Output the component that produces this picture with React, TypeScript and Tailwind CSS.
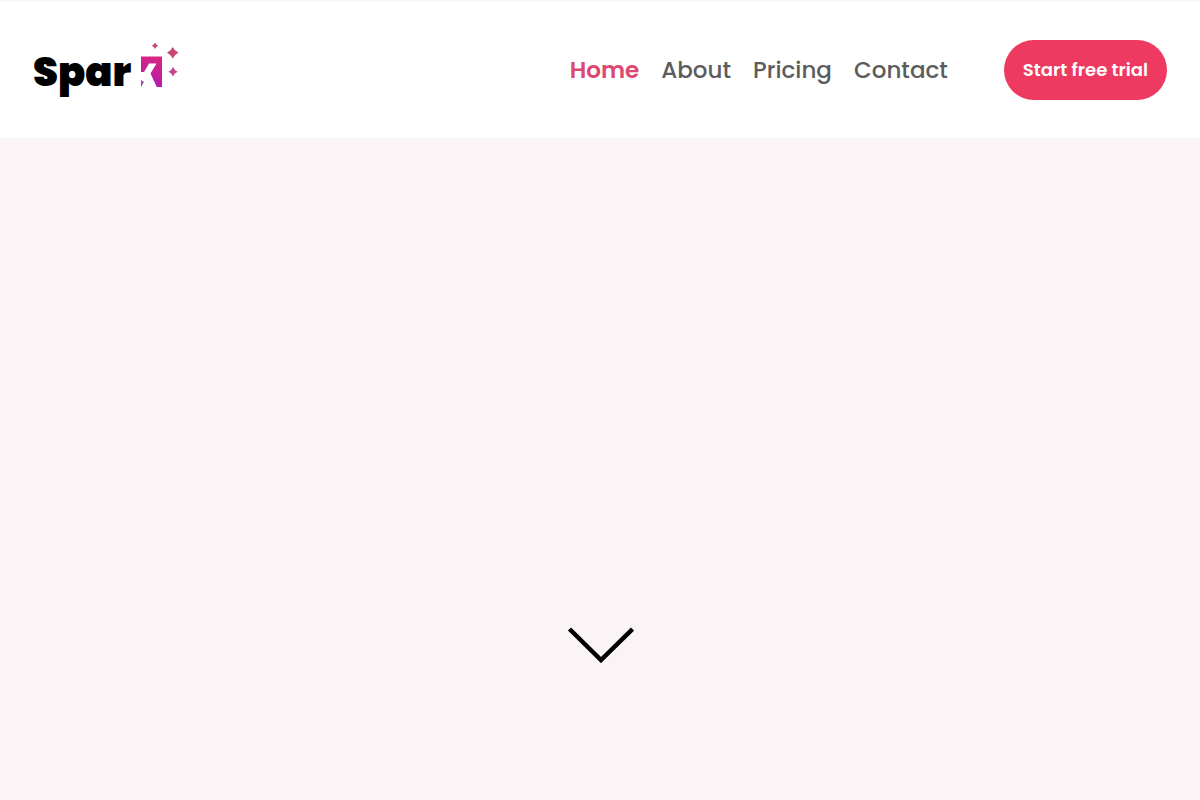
const navLinks = [
  { label: "Home", active: true },
  { label: "About", active: false },
  { label: "Pricing", active: false },
  { label: "Contact", active: false },
];

function SparkMark() {
  return (
    <svg className="h-14 w-10" viewBox="-1 -1 40 56" aria-hidden="true">
      <defs>
        <linearGradient id="tile" x1="0.7" y1="0" x2="0.5" y2="1">
          <stop offset="0" stopColor="#d9277f" />
          <stop offset="1" stopColor="#b01ab4" />
        </linearGradient>
      </defs>
      <path d="M1 13.500H22V44H1Z" fill="url(#tile)" />
      <path d="M0 29H4L9 20.500H16.500L10.500 30.500 17 44.500H0Z" fill="#fff" />
      <path d="M1 37 4 39 1 44Z" fill="#a04cae" />
      <path d="M15 -0.500Q16 1.700 18.200 2.700Q16 3.700 15 5.900Q14 3.700 11.800 2.700Q14 1.700 15 -0.500Z" fill="#c4486a" />
      <path d="M32.700 4Q34.500 8 38.500 9.700Q34.500 11.500 32.700 15.500Q31 11.500 27 9.700Q31 8 32.700 4Z" fill="#cc476f" />
      <path d="M33 24Q34.300 27.400 37.700 28.700Q34.300 30 33 33.400Q31.700 30 28.300 28.700Q31.700 27.400 33 24Z" fill="#c8458a" />
    </svg>
  );
}

export default function App() {
  return (
    <div className="flex min-h-screen flex-col bg-[#faf4f6] font-['Poppins','Inter',sans-serif]">
      <header className="flex items-center justify-between border-t-2 border-[#f8f8f8] bg-white px-[33px] py-[38px]">
        <a href="#" aria-label="Spark" className="flex items-end gap-2">
          <span className="text-[40px] leading-[52px] font-black text-black">Spar</span>
          <SparkMark />
        </a>
        <div className="flex items-center gap-14">
          <nav className="flex items-center gap-[22px]">
            {navLinks.map((link) => (
              <a
                key={link.label}
                href="#"
                className={link.active ? "text-[23px] font-semibold text-[#dc4870]" : "text-[23px] font-medium text-[#5c5c5c]"}
              >
                {link.label}
              </a>
            ))}
          </nav>
          <button className="rounded-full bg-[#ee3a60] px-[19px] py-4 text-lg leading-7 font-semibold text-white">
            Start free trial
          </button>
        </div>
      </header>
      <main className="flex flex-1 flex-col items-center justify-end pb-[137px]">
        <a href="#" aria-label="Scroll down">
          <svg className="block h-9 w-[68px]" viewBox="0 0 68 36" fill="none" aria-hidden="true">
            <path d="M3.500 2 35 33 66.500 2" stroke="#000" strokeWidth="4.500" />
          </svg>
        </a>
      </main>
    </div>
  );
}
